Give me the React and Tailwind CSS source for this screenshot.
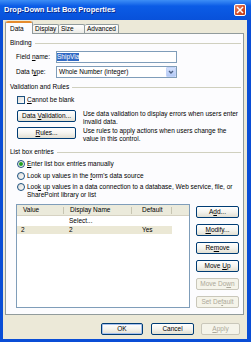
import React from 'react';

// XP style dialog, scaled down
const btnBase = 'flex items-center justify-center h-[12px] rounded-[2px] border text-[6.5px] leading-none';
const btnOn = 'border-[#003c74] bg-linear-to-b from-white via-[#f5f4ef] to-[#e2dfd2] text-black';
const btnOff = 'border-[#c9c7ba] bg-[#f5f4ea] text-[#aca899]';

const XpButton = ({ children, className = '', disabled, primary }) => (
  <div
    className={`${btnBase} ${disabled ? btnOff : btnOn} ${primary ? 'shadow-[inset_0_0_0_1px_#a9c2ee]' : ''} ${className}`}
  >
    <span className="whitespace-pre">{children}</span>
  </div>
);

const Group = ({ label, className = '' }) => (
  <div className={`flex items-center h-[10px] ${className}`}>
    <span>{label}</span>
    <div className="flex-1 h-px bg-[#d0d0bf] ml-[3px]" />
  </div>
);

const Radio = ({ checked }) => (
  <div className="w-[8px] h-[8px] shrink-0 rounded-full border border-[#1c5180] bg-linear-to-br from-[#dcdcd7] to-white flex items-center justify-center">
    {checked && <div className="w-[4px] h-[4px] rounded-full bg-[#21a121]" />}
  </div>
);

const HeaderCell = ({ label, className }) => (
  <div className={`flex items-center justify-between h-full ${className}`}>
    <span>{label}</span>
    <div className="w-px h-[7px] bg-[#c7c5b2]" />
  </div>
);

const tabs = [
  { label: 'Display', w: 'w-[26px]' },
  { label: 'Size', w: 'w-[26px]' },
  { label: 'Advanced', w: 'w-[34px]' },
];

const sideButtons = [
  { label: <>A<u>d</u>d...</> },
  { label: <><u>M</u>odify...</> },
  { label: <>Re<u>m</u>ove</> },
  { label: <>Move <u>U</u>p</> },
  { label: <>Move Do<u>w</u>n</>, disabled: true },
  { label: <>Set De<u>f</u>ault</>, disabled: true },
];

export default function App() {
  return (
    <div className="w-[251px] h-[342px] bg-[#0a4ed6] flex flex-col font-['Liberation_Sans',Arial,sans-serif] text-[6.5px] leading-[8px] text-black overflow-hidden">
      {/* Title bar */}
      <div className="h-[20px] shrink-0 flex items-center pl-[4px] pr-[5px] bg-linear-to-b from-[#3d8ef6] via-[#0b5ce6] via-30% to-[#0851da]">
        <span className="flex-1 text-white font-bold text-[7.5px] [text-shadow:1px_1px_0_#0a2a8a]">
          Drop-Down List Box Properties
        </span>
        <div className="w-[12px] h-[12px] rounded-[2px] border border-white bg-linear-to-br from-[#e9886a] via-[#d6502c] to-[#bd3a14] flex items-center justify-center">
          <svg width="8" height="8" viewBox="0 0 8 8">
            <path d="M1.5 1.5 L6.5 6.5 M6.5 1.5 L1.5 6.5" stroke="white" strokeWidth="1.5" strokeLinecap="square" />
          </svg>
        </div>
      </div>

      {/* Body */}
      <div className="flex-1 ml-[3px] mr-[4px] mb-[3px] bg-[#ece9d8] flex flex-col">
        {/* Tabs */}
        <div className="h-[13px] shrink-0 flex items-end pl-[2px] relative z-10">
          <div className="w-[28px] h-[13px] -mb-px bg-[#fcfcfe] border-x border-[#919b9c] rounded-t-[2px] flex flex-col">
            <div className="h-[2px] bg-[#e68b2c] rounded-t-[2px]" />
            <div className="flex-1 flex items-center pl-[4px]">Data</div>
          </div>
          {tabs.map((t) => (
            <div
              key={t.label}
              className={`${t.w} h-[9px] border-t border-r border-[#919b9c] rounded-t-[2px] bg-linear-to-b from-white to-[#ecebe6] flex items-center pl-[2px]`}
            >
              {t.label}
            </div>
          ))}
        </div>

        {/* Panel */}
        <div className="h-[282px] shrink-0 ml-[2px] mr-[3px] border border-[#919b9c] bg-[#fcfcfe] pl-[4px] pr-[2px] pt-[4px] flex flex-col">
          <Group label="Binding" />

          <div className="mt-[3px] h-[12px] flex items-center pl-[6px]">
            <span className="w-[40px]">Field <u>n</u>ame:</span>
            <div className="w-[121px] h-[12px] border border-[#7f9db9] bg-white flex items-center">
              <span className="bg-[#316ac5] text-white h-[8px] flex items-center">ShipVia</span>
            </div>
          </div>

          <div className="mt-[3px] h-[12px] flex items-center pl-[6px]">
            <span className="w-[40px]">Data t<u>y</u>pe:</span>
            <div className="w-[121px] h-[12px] border border-[#7f9db9] bg-white flex items-center justify-between pl-[2px]">
              <span>Whole Number (integer)</span>
              <div className="w-[10px] h-[10px] rounded-[1px] bg-linear-to-b from-[#d3e0fc] to-[#b3c9f5] border border-[#c3d3f8] flex items-center justify-center">
                <svg width="8" height="8" viewBox="0 0 8 8">
                  <path d="M2 3 L4 5 L6 3" stroke="#4d6185" strokeWidth="1.4" fill="none" />
                </svg>
              </div>
            </div>
          </div>

          <Group label="Validation and Rules" className="mt-[4px]" />

          <div className="mt-[3px] h-[9px] flex items-center pl-[7px]">
            <div className="w-[8px] h-[8px] border border-[#1c5180] bg-linear-to-br from-[#dcdcd7] to-white" />
            <span className="ml-[2px]"><u>C</u>annot be blank</span>
          </div>

          <div className="mt-[6px] flex items-start pl-[7px]">
            <XpButton className="w-[59px] shrink-0">Data <u>V</u>alidation...</XpButton>
            <p className="ml-[7px]">
              Use data validation to display errors when users enter
              <br />
              invalid data.
            </p>
          </div>

          <div className="mt-[1px] flex items-start pl-[7px]">
            <XpButton className="w-[59px] shrink-0"><u>R</u>ules...</XpButton>
            <p className="ml-[7px]">
              Use rules to apply actions when users change the
              <br />
              value in this control.
            </p>
          </div>

          <Group label="List box entries" className="mt-[4px]" />

          <div className="mt-[2px] h-[9px] flex items-center pl-[7px]">
            <Radio checked />
            <span className="ml-[2px]"><u>E</u>nter list box entries manually</span>
          </div>
          <div className="mt-[3px] h-[9px] flex items-center pl-[7px]">
            <Radio />
            <span className="ml-[2px]">Look up values in the <u>f</u>orm's data source</span>
          </div>
          <div className="mt-[3px] flex items-start pl-[7px]">
            <div className="h-[7.5px] flex items-center">
              <Radio />
            </div>
            <p className="ml-[2px] leading-[7.5px]">
              Loo<u>k</u> up values in a data connection to a database, Web service, file, or
              <br />
              SharePoint library or list
            </p>
          </div>

          <div className="mt-[6px] flex items-start">
            <div className="ml-[6px] w-[174px] h-[104px] border border-[#7f9db9] bg-white flex flex-col">
              <div className="h-[11px] shrink-0 flex bg-[#ebeadb] border-b border-[#d6d2c2]">
                <HeaderCell label="Value" className="w-[47px] pl-[6px]" />
                <HeaderCell label="Display Name" className="w-[68px] pl-[6px]" />
                <HeaderCell label="Default" className="w-[40px] pl-[10px]" />
              </div>
              <div className="h-[9px] flex items-center">
                <div className="w-[47px]" />
                <div className="w-[68px] pl-[5px]">Select...</div>
              </div>
              <div className="h-[9px] flex items-center">
                <div className="w-[155px] h-[8px] flex items-center bg-[#ebe8d5]">
                  <div className="w-[47px] pl-[4px]">2</div>
                  <div className="w-[68px] pl-[5px]">2</div>
                  <div className="w-[40px] pl-[10px]">Yes</div>
                </div>
              </div>
            </div>

            <div className="ml-[6px] mt-[2px] w-[43px] flex flex-col gap-[6px]">
              {sideButtons.map((b, i) => (
                <XpButton key={i} disabled={b.disabled}>
                  {b.label}
                </XpButton>
              ))}
            </div>
          </div>
        </div>

        {/* Footer buttons */}
        <div className="mt-[8px] flex justify-end pr-[7px]">
          <XpButton primary className="w-[42px]">OK</XpButton>
          <XpButton className="w-[43px] ml-[8px]">Cancel</XpButton>
          <XpButton disabled className="w-[39px] ml-[7px]"><u>A</u>pply</XpButton>
        </div>
      </div>
    </div>
  );
}
